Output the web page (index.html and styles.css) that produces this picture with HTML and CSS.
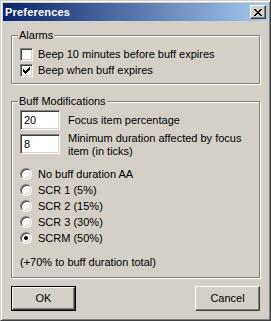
FILE: index.html
```html
<!DOCTYPE html>
<html>
<head>
<meta charset="utf-8">
<link rel="stylesheet" href="styles.css">
</head>
<body>
<div class="window">
  <div class="titlebar">
    <span class="title">Preferences</span>
    <span class="close"><svg width="8" height="7" viewBox="0 0 8 7"><path d="M0 0h2v1h-2zM6 0h2v1h-2zM1 1h2v1h-2zM5 1h2v1h-2zM2 2h4v1h-4zM3 3h2v1h-2zM2 4h4v1h-4zM1 5h2v1h-2zM5 5h2v1h-2zM0 6h2v1h-2zM6 6h2v1h-2z" fill="#000"/></svg></span>
  </div>
  <div class="content">
    <fieldset class="group alarms">
      <legend>Alarms</legend>
      <div class="row"><span class="check"></span><span>Beep 10 minutes before buff expires</span></div>
      <div class="row"><span class="check checked"><svg width="7" height="7" viewBox="0 0 7 7"><path d="M6 0h1v1h-1zM5 1h1v3h-1zM6 1h1v2h-1zM4 2h1v3h-1zM0 2h1v3h-1zM1 3h1v3h-1zM2 4h1v3h-1zM3 3h1v3h-1z" fill="#000"/></svg></span><span>Beep when buff expires</span></div>
    </fieldset>
    <fieldset class="group buffs">
      <legend>Buff Modifications</legend>
      <div class="field-row first">
        <span class="textbox">20</span>
        <span class="flabel">Focus item percentage</span>
      </div>
      <div class="field-row second">
        <span class="textbox">8</span>
        <span class="flabel">Minimum duration affected by focus<br>item (in ticks)</span>
      </div>
      <div class="radios">
        <div class="row"><span class="radio"></span><span>No buff duration AA</span></div>
        <div class="row"><span class="radio"></span><span>SCR 1 (5%)</span></div>
        <div class="row"><span class="radio"></span><span>SCR 2 (15%)</span></div>
        <div class="row"><span class="radio"></span><span>SCR 3 (30%)</span></div>
        <div class="row"><span class="radio on"></span><span>SCRM (50%)</span></div>
      </div>
      <div class="total">(+70% to buff duration total)</div>
    </fieldset>
    <div class="buttons">
      <span class="btn default"><span class="btn-inner">OK</span></span>
      <span class="btn"><span class="btn-inner">Cancel</span></span>
    </div>
  </div>
</div>
</body>
</html>
```
FILE: styles.css
```css
html, body {
  margin: 0;
  padding: 0;
  background: #d4d0c8;
}
body {
  font-family: "Liberation Sans", Arial, sans-serif;
  font-size: 11px;
  line-height: 13px;
  color: #000;
}
.window {
  width: 271px;
  height: 321px;
  box-sizing: border-box;
  background: #d4d0c8;
  border: 1px solid;
  border-color: #d4d0c8 #404040 #404040 #d4d0c8;
  box-shadow: inset 1px 1px 0 #fff, inset -1px -1px 0 #808080;
  padding: 2px;
}
.titlebar {
  height: 18px;
  display: flex;
  align-items: center;
  justify-content: space-between;
  padding: 0 2px;
  background: linear-gradient(to right, #0a246a, #a6caf0);
  color: #fff;
}
.title {
  font-weight: bold;
  font-size: 11px;
  letter-spacing: 0.2px;
}
.close {
  width: 16px;
  height: 14px;
  box-sizing: border-box;
  background: #d4d0c8;
  border: 1px solid;
  border-color: #fff #404040 #404040 #fff;
  box-shadow: inset -1px -1px 0 #808080;
  display: flex;
  align-items: center;
  justify-content: center;
  padding-right: 1px;
}
.close svg { display: block; }
.content {
  padding: 8px 8px 0;
}
.group {
  margin: 0;
  min-inline-size: 0;
  border: 1px solid #808080;
  box-shadow: 1px 1px 0 #fff, inset 1px 1px 0 #fff;
  padding: 4px 8px 5px;
}
.group legend {
  padding: 0 1px;
  margin-left: -2px;
  line-height: 13px;
  background: #d4d0c8;
}
.alarms .row {
  height: 16px;
}
.row {
  display: flex;
  align-items: center;
  height: 16px;
  white-space: nowrap;
}
.check {
  width: 13px;
  height: 13px;
  box-sizing: border-box;
  background: #fff;
  border: 1px solid;
  border-color: #808080 #fff #fff #808080;
  box-shadow: inset 1px 1px 0 #404040, inset -1px -1px 0 #d4d0c8;
  margin-right: 5px;
  display: flex;
  align-items: center;
  justify-content: center;
  flex: none;
}
.check svg { display: block; }
.buffs {
  margin-top: 11px;
  padding: 2px 8px 8px;
}
.field-row {
  display: flex;
  gap: 8px;
}
.field-row.first {
  align-items: center;
}
.field-row.second {
  align-items: flex-start;
  margin-top: 4px;
}
.field-row.second .flabel {
  margin-top: -2px;
}
.textbox {
  width: 40px;
  height: 20px;
  box-sizing: border-box;
  background: #fff;
  border: 1px solid;
  border-color: #808080 #fff #fff #808080;
  box-shadow: inset 1px 1px 0 #404040, inset -1px -1px 0 #d4d0c8;
  padding: 0 3px;
  display: flex;
  align-items: center;
  flex: none;
}
.radios {
  margin-top: 8px;
}
.radio {
  width: 12px;
  height: 12px;
  box-sizing: border-box;
  border-radius: 50%;
  background: #fff;
  border: 1px solid;
  border-color: #808080 #fff #fff #808080;
  box-shadow: inset 1px 1px 0 #404040, inset -1px -1px 0 #d4d0c8;
  margin-right: 6px;
  display: flex;
  align-items: center;
  justify-content: center;
  flex: none;
}
.radio.on::after {
  content: "";
  width: 4px;
  height: 4px;
  border-radius: 50%;
  background: #000;
}
.total {
  margin-top: 10px;
}
.buttons {
  display: flex;
  justify-content: space-between;
  margin-top: 8px;
}
.btn {
  width: 65px;
  height: 25px;
  box-sizing: border-box;
  background: #d4d0c8;
  border: 1px solid;
  border-color: #fff #404040 #404040 #fff;
  box-shadow: inset -1px -1px 0 #808080;
  display: flex;
  align-items: center;
  justify-content: center;
}
.btn.default {
  border: 1px solid #000;
  box-shadow: none;
  padding: 0;
}
.btn.default .btn-inner {
  width: 100%;
  height: 100%;
  box-sizing: border-box;
  border: 1px solid;
  border-color: #fff #404040 #404040 #fff;
  box-shadow: inset -1px -1px 0 #808080;
  display: flex;
  align-items: center;
  justify-content: center;
}
```
